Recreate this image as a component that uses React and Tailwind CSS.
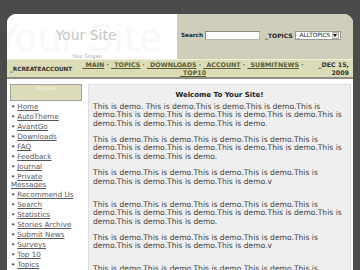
const demo = 'This is demo.';
const rep = (n) => Array(n).fill(demo).join('');

const paragraphs = [
  { text: 'This is demo. ' + rep(12), space: 'mb-[8.3px]' },
  { text: rep(12), space: 'mb-[8.3px]' },
  { text: rep(7) + 'This is demo.v', space: 'mb-[15px]' },
  { text: rep(12), space: 'mb-[8.3px]' },
  { text: rep(7) + 'This is demo.v', space: 'mb-[14px]' },
  { text: rep(12), space: '' },
];

const modules = [
  'Home',
  'AutoTheme',
  'AvantGo',
  'Downloads',
  'FAQ',
  'Feedback',
  'Journal',
  'Private Messages',
  'Recommend Us',
  'Search',
  'Statistics',
  'Stories Archive',
  'Submit News',
  'Surveys',
  'Top 10',
  'Topics',
];

const navLinks = ['_MAIN', '_TOPICS', '_DOWNLOADS', '_ACCOUNT', '_SUBMITNEWS', '_TOP10'];

export default function App() {
  return (
    <div className="w-[360px] h-[270px] overflow-hidden bg-[#4b4b4b] pt-[14px] px-[7px] font-['DejaVu_Sans',sans-serif]">
      <div className="bg-white rounded-t-[9px] overflow-hidden h-[300px]">
        {/* header */}
        <div className="flex h-[45px]">
          <div className="relative w-[170px] bg-white overflow-hidden">
            {/* faded logo watermark */}
            <div className="absolute left-[-11px] top-[1px] text-[38px] leading-[46px] text-[#f8f8f8] whitespace-nowrap">
              Your Site
            </div>
            <div className="relative flex flex-col items-center pt-[13px] pr-[12px]">
              <div className="text-[14px] leading-[16px] text-[#c6c6c6]">Your Site</div>
              <div className="mt-[10px] text-[5px] leading-[6px] text-[#a9a9a9] pl-[2px]">Your Slogan</div>
            </div>
          </div>
          <div className="flex-1 bg-[#cfceba] flex items-center pl-[4px] pb-[3px] gap-[2px]">
            <span className="text-[5.7px] font-bold text-[#222]">Search</span>
            <div className="w-[55px] h-[9px] bg-white border border-[#b8b8a8] border-t-[#8d8d80] border-l-[#8d8d80]" />
            <span className="ml-[3px] text-[6px] font-bold text-[#222]">_TOPICS</span>
            <div className="flex items-center w-[46px] h-[9px] bg-white border border-[#9a9a90]">
              <span className="flex-1 text-[5.8px] leading-[7px] text-[#222] pl-[1px]">_ALLTOPICS</span>
              <span className="w-[7px] h-[7px] bg-[#e4e4e0] border border-[#b0b0a8] flex items-center justify-center mr-[1px]">
                <svg width="4" height="3" viewBox="0 0 4 3">
                  <path d="M0 0h4L2 3z" fill="#111" />
                </svg>
              </span>
            </div>
          </div>
        </div>

        {/* nav bar */}
        <div className="flex items-center h-[20px] bg-[#dddcb8] border-t border-[#efeed6] border-b-2 border-b-[#8f8f85]">
          <div className="w-[68px] shrink-0 pl-[3px] pt-[2px] text-[5.7px] font-bold text-[#333]">_RCREATEACCOUNT</div>
          <div className="flex-1 text-center text-[6.3px] leading-[8px] font-bold text-[#5e5d2e] px-[2px]">
            {navLinks.map((l, i) => (
              <span key={l}>
                <span className="underline">{l}</span>
                {i < navLinks.length - 1 && <span> · </span>}
              </span>
            ))}
          </div>
          <div className="w-[42px] shrink-0 pr-[4px] text-right text-[6.3px] leading-[8px] font-bold text-[#333]">
            _DEC 15,
            <br />
            2009
          </div>
        </div>

        {/* body */}
        <div className="flex gap-[6px] pl-[3px] pr-[2px] pt-[5px]">
          <div className="w-[72px] shrink-0">
            <div className="h-[17px] bg-[#dddcb8] border border-[#a4a49a] text-center text-[4.5px] leading-[8px] text-[#f4f4ea]">
              Modules
            </div>
            <div className="mt-[1px] pr-[4px] text-[7.2px] text-[#555]">
              {modules.map((m) => (
                <div key={m} className="leading-[8px] py-[1px] pl-[1px]">
                  <span className="text-[#444] mr-[2px]">•</span>
                  <span className="underline">{m}</span>
                </div>
              ))}
            </div>
          </div>

          <div className="flex-1 bg-[#efefef] border border-[#dedede] px-[4px] pt-[5px]">
            <div className="text-center text-[7px] leading-[10px] font-bold text-[#222]">Welcome To Your Site!</div>
            <div className="mt-[3px] text-[7.6px] leading-[8.3px] text-[#3c3c3c]">
              {paragraphs.map((p, i) => (
                <p key={i} className={p.space}>
                  {p.text}
                </p>
              ))}
            </div>
          </div>
        </div>
      </div>
    </div>
  );
}
